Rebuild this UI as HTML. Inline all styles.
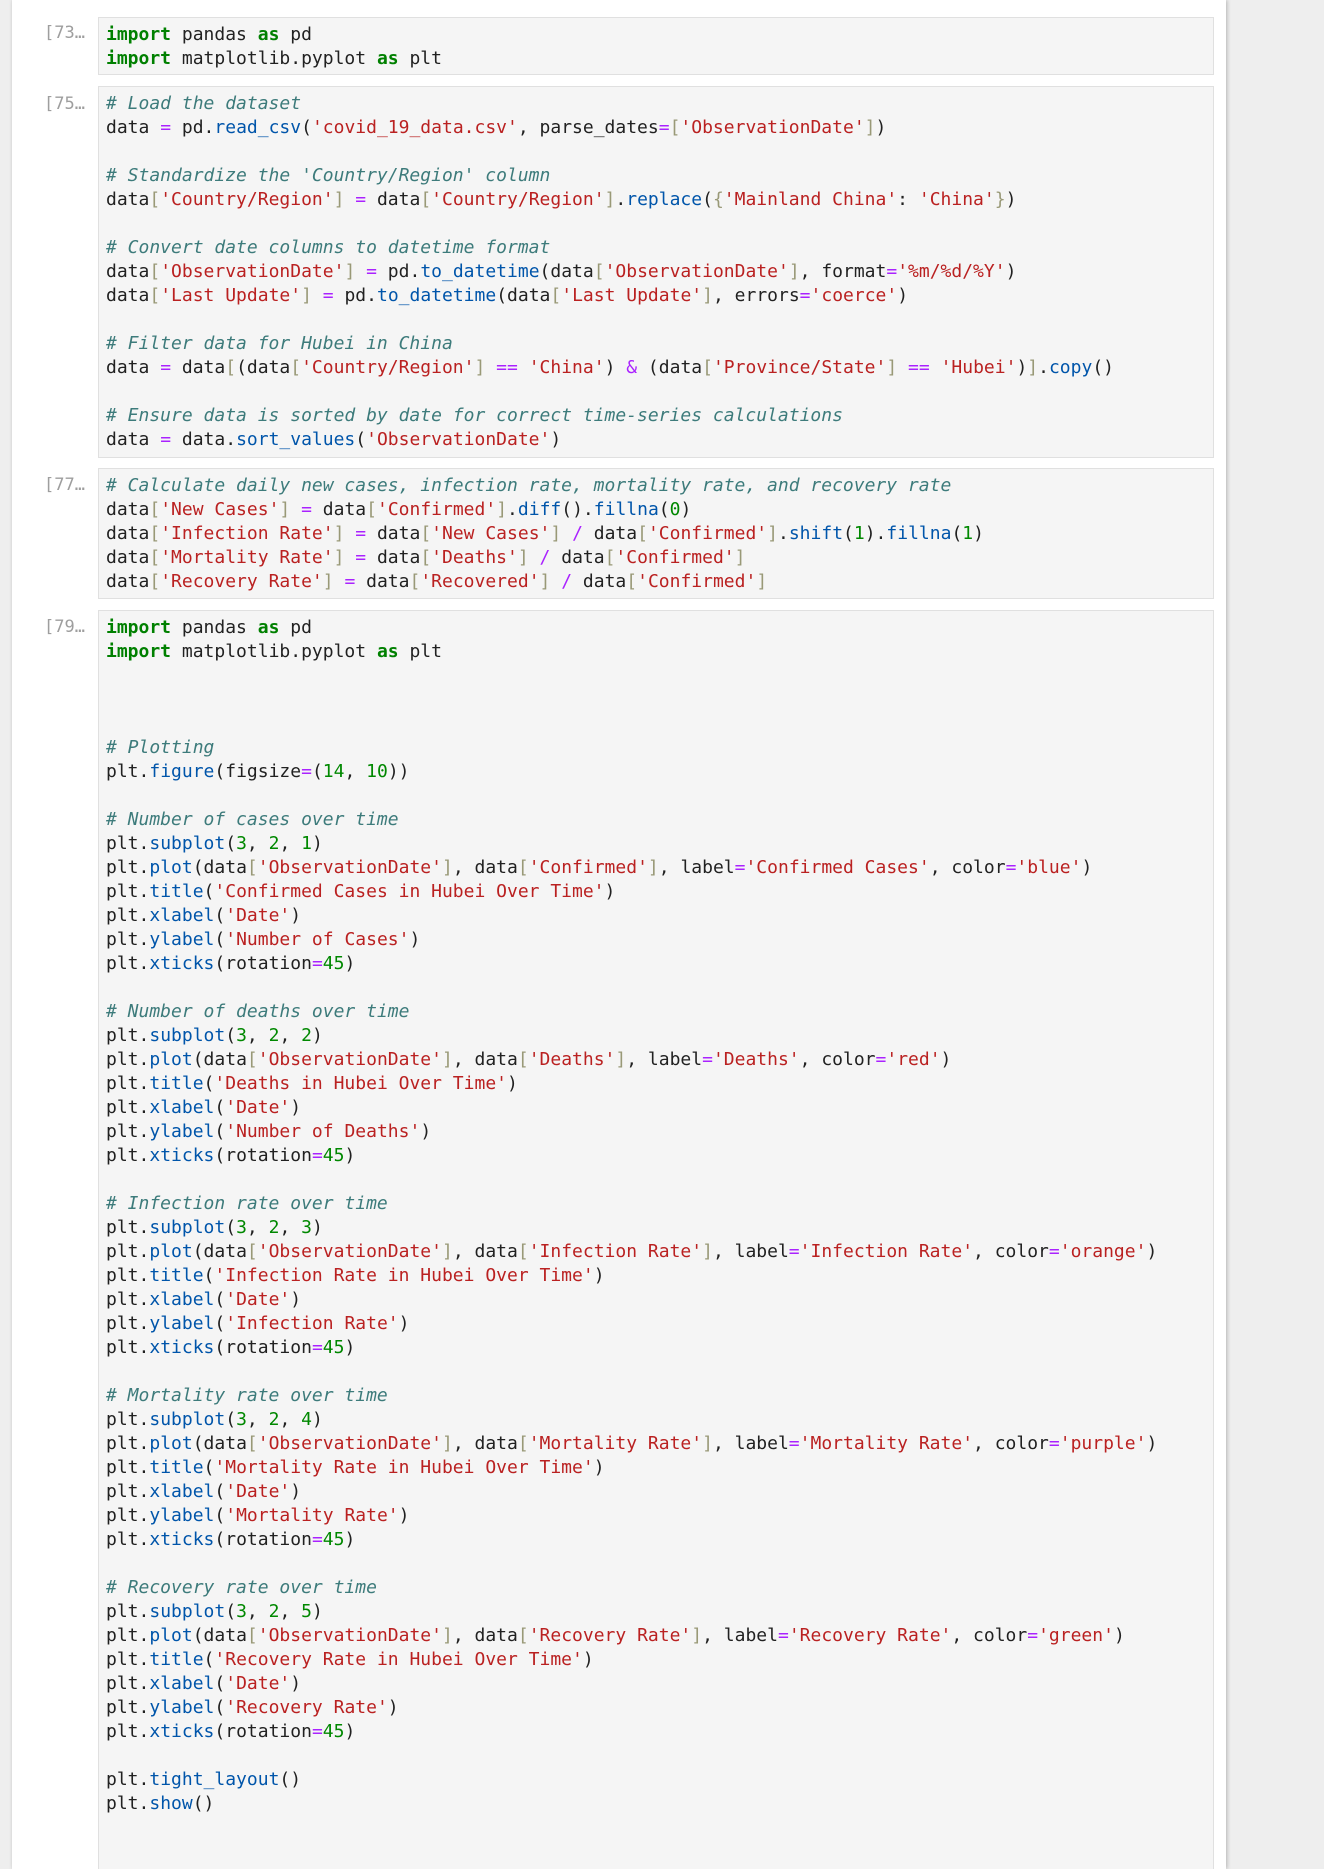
<!DOCTYPE html>
<html><head><meta charset="utf-8"><style>
html,body{margin:0;padding:0;overflow:hidden;height:1869px;}
body{width:1324px;height:1869px;overflow:hidden;background:#eeeeee;position:relative;font-family:"DejaVu Sans Mono","Liberation Mono",monospace;}
.page{position:absolute;left:12px;top:0;width:1214px;height:1869px;background:#fff;box-shadow:1px 0 4px rgba(0,0,0,.25);}
.cell{position:absolute;left:98px;width:1116px;background:#f5f5f5;border:1px solid #e0e0e0;box-sizing:border-box;padding:5px 0 5px 7px;overflow:hidden;}
.p{position:absolute;left:44px;color:#9e9e9e;font-size:17px;line-height:24px;}
pre{margin:0;font-family:inherit;font-size:18px;line-height:24px;color:#212121;white-space:pre;}
.k{color:#008000;font-weight:bold}.c{color:#3d7b7b;font-style:italic}.s{color:#ba2121}.o{color:#aa22ff}.b{color:#999977}.f{color:#0055aa}.n{color:#008800}
</style></head><body>
<div class="page"></div>
<div class="p" style="top:21px">[73…</div>
<div class="cell" style="top:17px;height:58px"><pre><span class="k">import</span> pandas <span class="k">as</span> pd
<span class="k">import</span> matplotlib.pyplot <span class="k">as</span> plt</pre></div>

<div class="p" style="top:92px">[75…</div>
<div class="cell" style="top:86px;height:372px"><pre><span class="c"># Load the dataset</span>
data <span class="o">=</span> pd.<span class="f">read_csv</span>(<span class="s">'covid_19_data.csv'</span>, parse_dates<span class="o">=</span><span class="b">[</span><span class="s">'ObservationDate'</span><span class="b">]</span>)

<span class="c"># Standardize the 'Country/Region' column</span>
data<span class="b">[</span><span class="s">'Country/Region'</span><span class="b">]</span> <span class="o">=</span> data<span class="b">[</span><span class="s">'Country/Region'</span><span class="b">]</span>.<span class="f">replace</span>(<span class="b">{</span><span class="s">'Mainland China'</span>: <span class="s">'China'</span><span class="b">}</span>)

<span class="c"># Convert date columns to datetime format</span>
data<span class="b">[</span><span class="s">'ObservationDate'</span><span class="b">]</span> <span class="o">=</span> pd.<span class="f">to_datetime</span>(data<span class="b">[</span><span class="s">'ObservationDate'</span><span class="b">]</span>, format<span class="o">=</span><span class="s">'%m/%d/%Y'</span>)
data<span class="b">[</span><span class="s">'Last Update'</span><span class="b">]</span> <span class="o">=</span> pd.<span class="f">to_datetime</span>(data<span class="b">[</span><span class="s">'Last Update'</span><span class="b">]</span>, errors<span class="o">=</span><span class="s">'coerce'</span>)

<span class="c"># Filter data for Hubei in China</span>
data <span class="o">=</span> data<span class="b">[</span>(data<span class="b">[</span><span class="s">'Country/Region'</span><span class="b">]</span> <span class="o">==</span> <span class="s">'China'</span>) <span class="o">&amp;</span> (data<span class="b">[</span><span class="s">'Province/State'</span><span class="b">]</span> <span class="o">==</span> <span class="s">'Hubei'</span>)<span class="b">]</span>.<span class="f">copy</span>()

<span class="c"># Ensure data is sorted by date for correct time-series calculations</span>
data <span class="o">=</span> data.<span class="f">sort_values</span>(<span class="s">'ObservationDate'</span>)</pre></div>

<div class="p" style="top:473px">[77…</div>
<div class="cell" style="top:468px;height:131px"><pre><span class="c"># Calculate daily new cases, infection rate, mortality rate, and recovery rate</span>
data<span class="b">[</span><span class="s">'New Cases'</span><span class="b">]</span> <span class="o">=</span> data<span class="b">[</span><span class="s">'Confirmed'</span><span class="b">]</span>.<span class="f">diff</span>().<span class="f">fillna</span>(<span class="n">0</span>)
data<span class="b">[</span><span class="s">'Infection Rate'</span><span class="b">]</span> <span class="o">=</span> data<span class="b">[</span><span class="s">'New Cases'</span><span class="b">]</span> <span class="o">/</span> data<span class="b">[</span><span class="s">'Confirmed'</span><span class="b">]</span>.<span class="f">shift</span>(<span class="n">1</span>).<span class="f">fillna</span>(<span class="n">1</span>)
data<span class="b">[</span><span class="s">'Mortality Rate'</span><span class="b">]</span> <span class="o">=</span> data<span class="b">[</span><span class="s">'Deaths'</span><span class="b">]</span> <span class="o">/</span> data<span class="b">[</span><span class="s">'Confirmed'</span><span class="b">]</span>
data<span class="b">[</span><span class="s">'Recovery Rate'</span><span class="b">]</span> <span class="o">=</span> data<span class="b">[</span><span class="s">'Recovered'</span><span class="b">]</span> <span class="o">/</span> data<span class="b">[</span><span class="s">'Confirmed'</span><span class="b">]</span></pre></div>

<div class="p" style="top:615px">[79…</div>
<div class="cell" style="top:610px;height:1259px;border-bottom:none"><pre><span class="k">import</span> pandas <span class="k">as</span> pd
<span class="k">import</span> matplotlib.pyplot <span class="k">as</span> plt



<span class="c"># Plotting</span>
plt.<span class="f">figure</span>(figsize<span class="o">=</span>(<span class="n">14</span>, <span class="n">10</span>))

<span class="c"># Number of cases over time</span>
plt.<span class="f">subplot</span>(<span class="n">3</span>, <span class="n">2</span>, <span class="n">1</span>)
plt.<span class="f">plot</span>(data<span class="b">[</span><span class="s">'ObservationDate'</span><span class="b">]</span>, data<span class="b">[</span><span class="s">'Confirmed'</span><span class="b">]</span>, label<span class="o">=</span><span class="s">'Confirmed Cases'</span>, color<span class="o">=</span><span class="s">'blue'</span>)
plt.<span class="f">title</span>(<span class="s">'Confirmed Cases in Hubei Over Time'</span>)
plt.<span class="f">xlabel</span>(<span class="s">'Date'</span>)
plt.<span class="f">ylabel</span>(<span class="s">'Number of Cases'</span>)
plt.<span class="f">xticks</span>(rotation<span class="o">=</span><span class="n">45</span>)

<span class="c"># Number of deaths over time</span>
plt.<span class="f">subplot</span>(<span class="n">3</span>, <span class="n">2</span>, <span class="n">2</span>)
plt.<span class="f">plot</span>(data<span class="b">[</span><span class="s">'ObservationDate'</span><span class="b">]</span>, data<span class="b">[</span><span class="s">'Deaths'</span><span class="b">]</span>, label<span class="o">=</span><span class="s">'Deaths'</span>, color<span class="o">=</span><span class="s">'red'</span>)
plt.<span class="f">title</span>(<span class="s">'Deaths in Hubei Over Time'</span>)
plt.<span class="f">xlabel</span>(<span class="s">'Date'</span>)
plt.<span class="f">ylabel</span>(<span class="s">'Number of Deaths'</span>)
plt.<span class="f">xticks</span>(rotation<span class="o">=</span><span class="n">45</span>)

<span class="c"># Infection rate over time</span>
plt.<span class="f">subplot</span>(<span class="n">3</span>, <span class="n">2</span>, <span class="n">3</span>)
plt.<span class="f">plot</span>(data<span class="b">[</span><span class="s">'ObservationDate'</span><span class="b">]</span>, data<span class="b">[</span><span class="s">'Infection Rate'</span><span class="b">]</span>, label<span class="o">=</span><span class="s">'Infection Rate'</span>, color<span class="o">=</span><span class="s">'orange'</span>)
plt.<span class="f">title</span>(<span class="s">'Infection Rate in Hubei Over Time'</span>)
plt.<span class="f">xlabel</span>(<span class="s">'Date'</span>)
plt.<span class="f">ylabel</span>(<span class="s">'Infection Rate'</span>)
plt.<span class="f">xticks</span>(rotation<span class="o">=</span><span class="n">45</span>)

<span class="c"># Mortality rate over time</span>
plt.<span class="f">subplot</span>(<span class="n">3</span>, <span class="n">2</span>, <span class="n">4</span>)
plt.<span class="f">plot</span>(data<span class="b">[</span><span class="s">'ObservationDate'</span><span class="b">]</span>, data<span class="b">[</span><span class="s">'Mortality Rate'</span><span class="b">]</span>, label<span class="o">=</span><span class="s">'Mortality Rate'</span>, color<span class="o">=</span><span class="s">'purple'</span>)
plt.<span class="f">title</span>(<span class="s">'Mortality Rate in Hubei Over Time'</span>)
plt.<span class="f">xlabel</span>(<span class="s">'Date'</span>)
plt.<span class="f">ylabel</span>(<span class="s">'Mortality Rate'</span>)
plt.<span class="f">xticks</span>(rotation<span class="o">=</span><span class="n">45</span>)

<span class="c"># Recovery rate over time</span>
plt.<span class="f">subplot</span>(<span class="n">3</span>, <span class="n">2</span>, <span class="n">5</span>)
plt.<span class="f">plot</span>(data<span class="b">[</span><span class="s">'ObservationDate'</span><span class="b">]</span>, data<span class="b">[</span><span class="s">'Recovery Rate'</span><span class="b">]</span>, label<span class="o">=</span><span class="s">'Recovery Rate'</span>, color<span class="o">=</span><span class="s">'green'</span>)
plt.<span class="f">title</span>(<span class="s">'Recovery Rate in Hubei Over Time'</span>)
plt.<span class="f">xlabel</span>(<span class="s">'Date'</span>)
plt.<span class="f">ylabel</span>(<span class="s">'Recovery Rate'</span>)
plt.<span class="f">xticks</span>(rotation<span class="o">=</span><span class="n">45</span>)

plt.<span class="f">tight_layout</span>()
plt.<span class="f">show</span>()</pre></div>
</body></html>
